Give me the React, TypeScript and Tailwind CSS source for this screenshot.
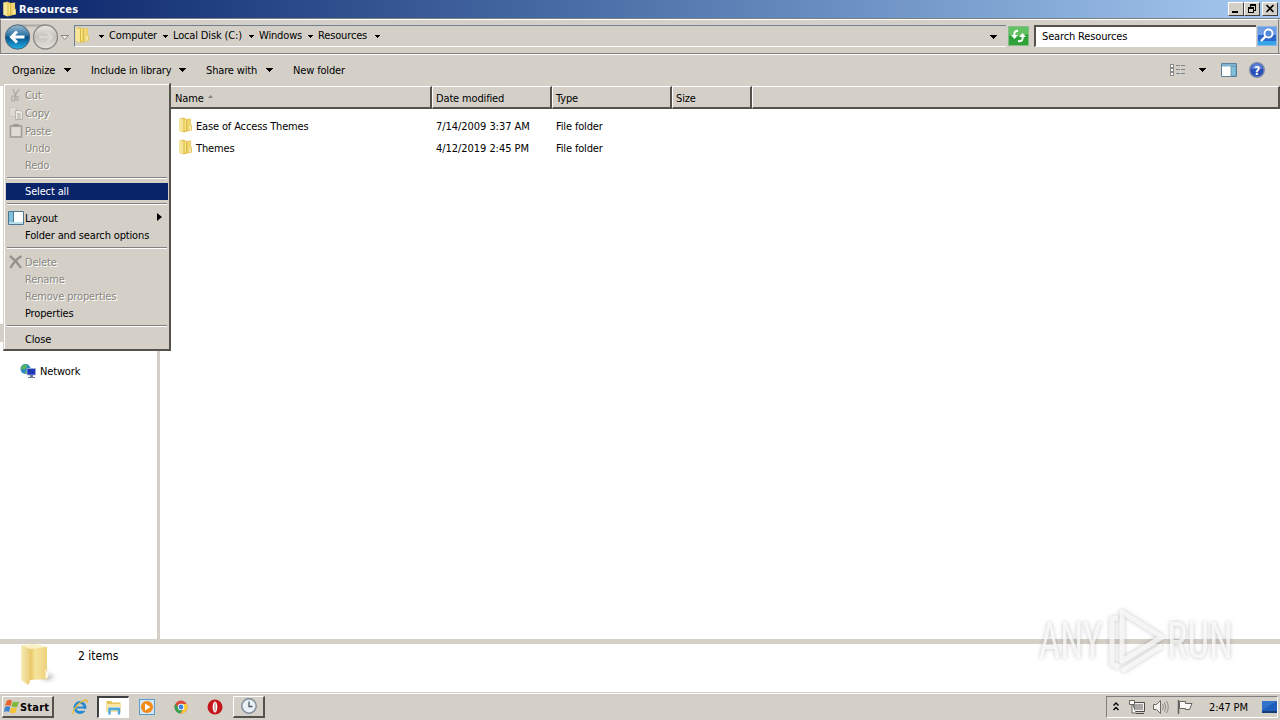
import React from 'react'
import clsx from 'clsx'

const Folder = ({ className }: { className?: string }) => (
  <svg viewBox="0 0 14 16" className={clsx('shrink-0', className)}>
    <path d="M.5 1 L5 0 L8 1.500 L13 1 V7 L14 9 V14 L9 15 L5 16 L.5 14.500 Z" fill="#e6c765" />
    <path d="M.5 1 L5 2 V15.500 L.5 14 Z" fill="#f6e798" />
    <path d="M5 2 H8.500 V14.500 L5 15.500 Z" fill="#dcb53e" />
    <path d="M6 2 H7.500 V14 L6 14.500 Z" fill="#f9ee8e" />
    <path d="M9 2 L12.500 1.500 V13.500 L9 14 Z" fill="#efd673" />
    <path d="M12 9 V13.500" stroke="#fffbe0" strokeWidth="1" />
  </svg>
)

const Caret = ({ className }: { className?: string }) => (
  <svg viewBox="0 0 7 4" preserveAspectRatio="none" className={clsx('shrink-0', className)} shapeRendering="crispEdges">
    <path d="M0 0 H7 L3.500 4 Z" fill="#000" />
  </svg>
)

const CutIcon = () => (
  <svg viewBox="0 0 16 16" className="size-4">
    <path d="M5 2 L8 10 M11 2 L6 10" stroke="#b3afa7" strokeWidth="1.500" />
    <path d="M4 9 h2.500 v5 H3.500 z M8 9.500 h2 v4 h-2 z" fill="none" stroke="#b3afa7" strokeWidth="1.200" />
  </svg>
)

const CopyIcon = () => (
  <svg viewBox="0 0 16 16" className="size-4">
    <path d="M1.500 2.500 h7 v9 h-7 z" fill="#dedad3" stroke="#c9c5bd" />
    <path d="M7.500 5.500 h5 l2 2 v7 h-7 z" fill="#eceae6" stroke="#b8b4ac" />
    <path d="M9 9 h4 M9 11 h4 M9 13 h4" stroke="#aaa69e" />
  </svg>
)

const PasteIcon = () => (
  <svg viewBox="0 0 16 16" className="size-4">
    <path d="M2.500 3 h11 v11 h-11 z" fill="#dfdcd5" stroke="#a09c94" strokeWidth="1.600" />
    <path d="M5 1 h6 v3 H5 z" fill="#a09c94" />
  </svg>
)

const LayoutIcon = () => (
  <svg viewBox="0 0 16 16" className="size-4">
    <path d="M.5 1.500 h15 v13 H.5 z" fill="#fff" stroke="#4c7792" />
    <path d="M1 2 h4 v10 H1 z" fill="#7fc0dc" />
    <path d="M5.500 2 v10" stroke="#4c7792" />
    <path d="M1 12 h14 v2 H1 z" fill="#b9dcea" />
  </svg>
)

const DeleteIcon = () => (
  <svg viewBox="0 0 16 16" className="size-4">
    <path d="M2 2 C6 5 10 9 13 14 M13.500 2 C9 5 5 9 2.500 14" stroke="#96928a" strokeWidth="2.200" fill="none" />
  </svg>
)

type Item = { label?: string; icon?: React.ReactNode; off?: boolean; on?: boolean; sub?: boolean }

const menu: Item[] = [
  { label: 'Cut', icon: <CutIcon />, off: true },
  { label: 'Copy', icon: <CopyIcon />, off: true },
  { label: 'Paste', icon: <PasteIcon />, off: true },
  { label: 'Undo', off: true },
  { label: 'Redo', off: true },
  {},
  { label: 'Select all', on: true },
  {},
  { label: 'Layout', icon: <LayoutIcon />, sub: true },
  { label: 'Folder and search options' },
  {},
  { label: 'Delete', icon: <DeleteIcon />, off: true },
  { label: 'Rename', off: true },
  { label: 'Remove properties', off: true },
  { label: 'Properties' },
  {},
  { label: 'Close' },
]

const OrganizeMenu = () => (
  <div className="absolute left-[3px] top-[83px] h-[268px] w-[168px] border-b-2 border-r-2 border-l border-t border-[#55524d] border-l-[#d4d0c8] border-t-[#d4d0c8] bg-[#d4d0c8]">
    <div className="h-full border-l border-t border-white px-px pt-px">
      {menu.map((m, i) =>
        m.label ? (
          <div
            key={i}
            className={clsx(
              'flex items-center pl-0.5',
              m.icon ? 'h-[18px]' : 'h-[17px]',
              m.off && 'text-[#8a877f] [text-shadow:1px_1px_0_#fff]',
              m.on && 'bg-[#0a246a] text-white',
            )}
          >
            <span className="flex w-[17px] shrink-0">{m.icon}</span>
            <span className={clsx('grow', m.icon && 'pt-0.5')}>{m.label}</span>
            {m.sub && (
              <svg viewBox="0 0 5 8" className="mb-0.5 mr-1.5 h-2 w-[5px]">
                <path d="M0 0 L5 4 L0 8 Z" />
              </svg>
            )}
          </div>
        ) : (
          <div key={i} className="h-[9px] px-px pt-[3px]">
            <div className="h-0.5 w-full border-b border-t border-b-white border-t-[#808080]" />
          </div>
        ),
      )}
    </div>
  </div>
)

const WinButton = ({ children, className }: { children: React.ReactNode; className?: string }) => (
  <div className={clsx('h-3.5 w-4 border-b border-r border-l border-t border-[#404040] border-l-white border-t-white bg-[#d4d0c8]', className)}>
    <svg viewBox="0 0 14 12" className="h-3 w-3.5" fill="none" stroke="#000" shapeRendering="crispEdges">
      {children}
    </svg>
  </div>
)

const TitleBar = () => (
  <div className="flex h-[18px] items-center bg-linear-to-r from-[#0a246a] to-[#a6caf0] pl-[3px] pr-0.5">
    <Folder className="h-4 w-[13px]" />
    <span className="ml-[3px] grow pt-px text-[11px] font-bold tracking-[0.22px] text-white">Resources</span>
    <WinButton>
      <path d="M3 9 h6" strokeWidth="2" />
    </WinButton>
    <WinButton>
      <path d="M5 1.500 h6 M5 2.500 h6 M5.500 1 v3 M10.500 2 v5 h-2 M3 4.500 h6 M3 5.500 h6 M3.500 5 v4.500 h5 v-4.500" />
    </WinButton>
    <WinButton className="ml-0.5">
      <path d="M3.500 2 L10.500 9 M10.500 2 L3.500 9" strokeWidth="1.600" shapeRendering="auto" />
    </WinButton>
  </div>
)

const NavButtons = () => (
  <svg viewBox="0 0 72 30" className="h-[30px] w-[72px] shrink-0">
    <defs>
      <linearGradient id="back" x2="0" y2="1">
        <stop offset="0" stopColor="#9bb9cd" />
        <stop offset=".45" stopColor="#2873a6" />
        <stop offset=".5" stopColor="#07508b" />
        <stop offset="1" stopColor="#23b5e8" />
      </linearGradient>
      <linearGradient id="fwd" x2="0" y2="1">
        <stop offset="0" stopColor="#e8e6e2" />
        <stop offset=".5" stopColor="#c5c2bc" />
        <stop offset="1" stopColor="#e6e3df" />
      </linearGradient>
    </defs>
    <path d="M15 4.500 H43" stroke="#aaa9a6" strokeWidth="2" />
    <circle cx="15.500" cy="16" r="12.200" fill="url(#back)" stroke="#4e6478" />
    <path d="M22.500 16 H10 M15 10.500 L9.500 16 L15 21.500" stroke="#fff" strokeWidth="3" fill="none" />
    <circle cx="43.500" cy="16" r="12" fill="url(#fwd)" stroke="#8b8985" strokeWidth="1.300" />
    <path d="M37 16 H50 M45 11 L50 16 L45 21" stroke="#d9d7d3" strokeWidth="2.500" fill="none" />
    <path d="M59 14.500 H66.500 L62.700 18.500 Z" fill="#f2f0ec" stroke="#8b8985" />
  </svg>
)

const crumbs = [
  { name: 'Computer', w: 'w-[64px]' },
  { name: 'Local Disk (C:)', w: 'w-[86px]' },
  { name: 'Windows', w: 'w-[59px]' },
  { name: 'Resources', w: 'w-[67px]' },
]

const AddressBar = () => (
  <div className="flex h-[36px] items-start border-b border-t border-[#808080] pr-px">
    <div className="flex h-[34px] w-full items-start border-l border-r border-t border-[#808080] border-t-white">
      <div className="ml-px mt-px">
        <NavButtons />
      </div>
      <div className="mt-[5px] flex h-[22px] w-[932px] items-center border-b border-l border-t border-[#708090] border-b-white">
        <Folder className="mb-0.5 h-4 w-3.5" />
        <Caret className="ml-[10px] h-[3px] w-[5px]" />
        <div className="ml-[5px] flex items-center">
          {crumbs.map((c) => (
            <div key={c.name} className={clsx('flex items-center justify-between', c.w)}>
              <span className="whitespace-nowrap">{c.name}</span>
              <Caret className="mr-[5px] h-[3px] w-[5px]" />
            </div>
          ))}
        </div>
        <div className="grow" />
        <Caret className="mr-[9px] mt-px h-1 w-[7px]" />
      </div>
      <svg viewBox="0 0 21 20" className="ml-0.5 mt-[6px] h-5 w-[21px] shrink-0">
        <rect x=".5" y=".5" width="20" height="19" fill="#2fa33a" stroke="#86bc86" />
        <path d="M1 1 H20 V8 Q10 12 1 9 Z" fill="#62c163" />
        <path d="M10 5 Q5.500 4 6.500 11" stroke="#fff" strokeWidth="2" fill="none" />
        <path d="M3 9 H10 L6.500 13 Z" fill="#fff" />
        <path d="M10 15 Q16 16 14.500 9.500" stroke="#fff" strokeWidth="2" fill="none" />
        <path d="M11 11 H18 L14.500 7 Z" fill="#fff" />
      </svg>
      <div className="ml-[5px] mt-[5px] flex h-[22px] w-[222px] items-center border-l-2 border-t-2 border-b border-[#55524d] border-b-white bg-white pl-1.5 pt-px">
        Search Resources
      </div>
      <svg viewBox="0 0 20 20" className="ml-px mt-[6px] size-5 shrink-0">
        <rect x=".5" y=".5" width="19" height="19" fill="#2a66cc" stroke="#8fb5e6" />
        <path d="M1 1 H19 V9 H1 Z" fill="#6c9ce4" />
        <path d="M1 15 H19 V19 H1 Z" fill="#36a5ea" />
        <circle cx="11.500" cy="7.500" r="4" fill="#5486d8" stroke="#fff" strokeWidth="1.800" />
        <path d="M8.500 10.500 L4 15" stroke="#fff" strokeWidth="2.400" />
      </svg>
    </div>
  </div>
)

const commands = [
  { name: 'Organize', w: 'w-[79px]', caret: true },
  { name: 'Include in library', w: 'w-[115px]', caret: true },
  { name: 'Share with', w: 'w-[87px]', caret: true },
  { name: 'New folder', w: 'w-[80px]' },
]

const Toolbar = () => (
  <div className="flex h-[32px] items-center border-t border-white pb-px pl-3 pr-[15px]">
    {commands.map((c) => (
      <div key={c.name} className={clsx('flex items-center justify-between', c.w)}>
        <span className="whitespace-nowrap pt-px">{c.name}</span>
        {c.caret && <Caret className="mr-5 h-1 w-[7px]" />}
      </div>
    ))}
    <div className="grow" />
    <svg viewBox="0 0 16 13" className="h-[13px] w-4" shapeRendering="crispEdges">
      {[0, 4, 8].map((y) => (
        <g key={y} fill="none">
          <rect x=".5" y={y + 0.5} width="3" height="3" fill="#fff" stroke="#8a8a8a" />
          <path d={`M6 ${y + 1.5} h4 M11 ${y + 1.5} h4`} stroke="#7d8590" />
        </g>
      ))}
    </svg>
    <Caret className="ml-[13px] h-1 w-[7px]" />
    <svg viewBox="0 0 16 14" className="ml-[15px] h-3.5 w-4">
      <path d="M.5 .5 h15 v13 H.5 z" fill="#fff" stroke="#5b8299" />
      <path d="M1 1 h14 v2.500 H1 z" fill="#7eb3cf" />
      <path d="M10 3.500 h5 v9.500 h-5 z" fill="#81c1de" stroke="#5b8299" strokeWidth=".7" />
    </svg>
    <svg viewBox="0 0 16 16" className="ml-3 size-4">
      <circle cx="8" cy="8" r="7.300" fill="#2a50b8" stroke="#7d8cb0" strokeWidth="1.400" />
      <path d="M2.500 7 A5.500 5.500 0 0 1 13.500 7 Z" fill="#5b7ed6" />
      <text x="8" y="12.500" textAnchor="middle" fontSize="12" fontWeight="bold" fill="#fff">?</text>
    </svg>
  </div>
)

const HeaderCell = ({ children, className }: { children?: React.ReactNode; className?: string }) => (
  <div className={clsx('flex items-center border-b-2 border-l border-r-2 border-t border-[#55524d] border-l-white border-t-white pt-[3px]', className)}>
    {children}
  </div>
)

const files = [
  { name: 'Ease of Access Themes', date: '7/14/2009 3:37 AM', type: 'File folder' },
  { name: 'Themes', date: '4/12/2019 2:45 PM', type: 'File folder' },
]

const FileList = () => (
  <div className="flex grow flex-col">
    <div className="flex h-[23px] bg-[#d4d0c8]">
      <HeaderCell className="w-[272px] pl-3.5">
        Name
        <svg viewBox="0 0 5 3" className="mb-1 ml-1 h-[3px] w-[5px]">
          <path d="M0 3 L2.500 0 L5 3 Z" fill="#85827b" />
        </svg>
      </HeaderCell>
      <HeaderCell className="w-[120px] pl-[3px]">Date modified</HeaderCell>
      <HeaderCell className="w-[120px] pl-[3px]">Type</HeaderCell>
      <HeaderCell className="w-[80px] pl-[3px]">Size</HeaderCell>
      <HeaderCell className="grow" />
    </div>
    <div className="pl-[19px] pt-[6px]">
      {files.map((f) => (
        <div key={f.name} className="flex h-[22px] items-center">
          <Folder className="mb-0.5 h-4 w-[13px]" />
          <span className="ml-1 w-[240px] pt-0.5">{f.name}</span>
          <span className="w-[120px] pt-0.5 tracking-[-0.05px]">{f.date}</span>
          <span className="pt-0.5">{f.type}</span>
        </div>
      ))}
    </div>
  </div>
)

const NavPane = () => (
  <div className="flex w-40 shrink-0 flex-col border-r-[3px] border-[#d4d0c8]">
    <div className="mt-[238px] h-[18px] w-[3px] bg-[#d4d0c8]" />
    <div className="mt-[20px] flex items-center pl-5">
      <svg viewBox="0 0 16 16" className="size-4">
        <circle cx="5.500" cy="6" r="5" fill="#2c86c4" />
        <path d="M2 3 Q5 0 8 3 L5 6 Q3 7 1 6 Z M5 8 L8 9 L5 11 Z" fill="#55b45c" />
        <path d="M7 5.500 H15.500 V12 H7 Z" fill="#1d36b8" stroke="#a7b6dc" strokeWidth=".8" />
        <path d="M10 12 h3 v2 h2 v1 H8 v-1 h2 z" fill="#6d7a96" />
      </svg>
      <span className="ml-1 pt-[3px]">Network</span>
    </div>
  </div>
)

const DetailsPane = () => (
  <div className="flex h-[53px] border-t-[5px] border-[#d4d0c8] bg-white pl-5">
    <svg viewBox="0 0 40 44" className="h-11 w-10 shrink-0">
      <defs>
        <linearGradient id="fold">
          <stop offset="0" stopColor="#e6c462" />
          <stop offset=".3" stopColor="#f6e49c" />
          <stop offset="1" stopColor="#ecd07a" />
        </linearGradient>
        <linearGradient id="flap">
          <stop offset="0" stopColor="#f7ebb8" />
          <stop offset="1" stopColor="#ebce78" />
        </linearGradient>
        <radialGradient id="shade">
          <stop offset="0" stopColor="#aab0ae" />
          <stop offset="1" stopColor="#fff" stopOpacity="0" />
        </radialGradient>
      </defs>
      <ellipse cx="27" cy="33" rx="12" ry="8" fill="url(#shade)" />
      <path d="M1 1 L16 0 L27 3 V10 L10 10 Z" fill="#faf0c6" />
      <path d="M10 5 L27 3 V23 L28 35 L10 36 Z" fill="url(#fold)" />
      <path d="M1 1 L10 5 V38 L8 41 L1 36 Z" fill="url(#flap)" />
      <path d="M25.500 25 L28.500 29 V33 L25.500 35 Z" fill="#fbf8e6" />
    </svg>
    <span className="ml-[18px] mt-[5px] text-[12px] tracking-[0px]">2 items</span>
  </div>
)

const TaskIcon = ({ children, className }: { children: React.ReactNode; className?: string }) => (
  <div className={clsx('flex h-[22px] w-8 items-center justify-center', className)}>
    <svg viewBox="0 0 16 16" className="size-4">
      {children}
    </svg>
  </div>
)

const Taskbar = () => (
  <div className="flex h-[28px] items-center border-t border-[#d4d0c8] bg-[#d4d0c8] shadow-[inset_0_1px_0_#fff]">
    <div className="ml-0.5 mt-px flex h-[22px] w-[52px] items-center border-b-2 border-l border-r-2 border-t border-[#55524d] border-l-white border-t-white pl-px">
      <svg viewBox="0 0 16 15" className="h-[15px] w-4">
        <path d="M3 1.500 Q6 0 8 2 L6.500 7 Q4 5.500 1 7 Z" fill="#e8632a" />
        <path d="M9 2.500 Q12 4 15 2.500 L13.500 7.500 Q10.500 9 7.500 7.300 Z" fill="#7fb83c" />
        <path d="M1 8 Q4 6.500 6.300 8 L5 13 Q2.500 11.500 0 13 Z" fill="#3c82cf" />
        <path d="M7.200 8.500 Q10 10 13 8.500 L11.500 13.500 Q8.500 15 6 13.500 Z" fill="#f5c330" />
      </svg>
      <span className="pt-0.5 text-[11px] font-bold tracking-[0.2px]">Start</span>
    </div>
    <TaskIcon className="ml-2.5">
      <circle cx="8" cy="8.500" r="5" fill="none" stroke="#2588d0" strokeWidth="3" />
      <path d="M4 8.500 H13" stroke="#2588d0" strokeWidth="2" />
      <path d="M10 10.800 H15" stroke="#d4d0c8" strokeWidth="2" />
      <path d="M2 15 C-2 14 7 2 14 1 Q16 1 14.500 4" stroke="#e8b93c" strokeWidth="1.300" fill="none" />
    </TaskIcon>
    <TaskIcon className="ml-px border-b border-l-2 border-r border-t-2 border-white border-l-[#404040] border-t-[#404040] bg-white">
      <path d="M.5 2 h5 l1 1.500 h8 v9 H.5 z" fill="#e5c35a" />
      <path d="M1 5 h14 v7 H1 z" fill="#f8e7a2" />
      <path d="M3.500 15.500 V10 H13 V15.500" stroke="#4ea8dc" strokeWidth="2.400" fill="none" />
      <path d="M2.500 8.500 H14" stroke="#a5d6ee" />
    </TaskIcon>
    <TaskIcon className="ml-0.5">
      <rect x=".5" y=".5" width="15" height="15" fill="#d5e6f4" stroke="#5b9bd0" />
      <circle cx="8" cy="8" r="6" fill="#f28a16" />
      <path d="M6 4.500 L11.500 8 L6 11.500 Z" fill="#fff" />
    </TaskIcon>
    <TaskIcon className="ml-0.5">
      <circle cx="8" cy="8" r="6.500" fill="#de4a3c" />
      <path d="M2.400 4.700 A6.500 6.500 0 0 0 7.500 14.500 L10.500 9 L6 9.500 Z" fill="#35a352" />
      <path d="M8 5 H13.800 A6.500 6.500 0 0 1 7.500 14.500 L10.800 9.500 Z" fill="#f7cb3a" />
      <circle cx="8" cy="8" r="3.200" fill="#fff" />
      <circle cx="8" cy="8" r="2.400" fill="#4182e0" />
    </TaskIcon>
    <TaskIcon className="ml-0.5">
      <circle cx="8" cy="8" r="7.500" fill="#c4161c" />
      <ellipse cx="8" cy="8" rx="2.300" ry="5.500" fill="#fff" />
      <ellipse cx="8" cy="8" rx="1" ry="4.800" fill="#d4b4b4" />
    </TaskIcon>
    <TaskIcon className="ml-0.5 border-b-2 border-l border-r-2 border-t border-[#55524d] border-l-white border-t-white">
      <circle cx="8" cy="8" r="7.200" fill="#e9f1f7" stroke="#7f8a94" strokeWidth="1.400" />
      <path d="M8 3.500 V8.500 H11.500" stroke="#4b5964" strokeWidth="1.300" fill="none" />
    </TaskIcon>
    <div className="grow" />
    <div className="mr-0.5 mt-px flex h-[22px] w-[172px] items-center border border-[#808080] border-b-white border-r-white pl-1.5">
      <svg viewBox="0 0 6 9" className="mb-0.5 h-[9px] w-1.5" fill="none" stroke="#000" strokeWidth="1.400">
        <path d="M.5 3.500 L3 1 L5.500 3.500 M.5 8 L3 5.500 L5.500 8" />
      </svg>
      <svg viewBox="0 0 16 16" className="ml-2.5 size-4" fill="none" stroke="#68655f">
        <path d="M4.500 3.500 H15.500 V12.500 H5.500 Z" fill="#a9a8a5" stroke="#4e4c48" />
        <path d="M5.500 4.500 H14.500 V11.500 H6" stroke="#f4f3f0" />
        <path d="M7 14.500 H15" stroke="#4e4c48" />
        <path d="M.5 1.500 H5.500 V5.500 H.5 Z M3 6 V14 H7" fill="#fff" />
      </svg>
      <svg viewBox="0 0 16 16" className="ml-2 size-4" fill="none" stroke="#6d6a64">
        <path d="M.5 5.500 H3.500 L7.500 1.500 V14.500 L3.500 10.500 H.5 Z" fill="#f4f3f0" />
        <path d="M9.500 5 Q11.500 8 9.500 11 M11.500 3.500 Q14 8 11.500 12.500 M13.500 2 Q17 8 13.500 14" stroke="#908d86" />
      </svg>
      <svg viewBox="0 0 16 16" className="ml-2 size-4" fill="none" stroke="#66635d">
        <path d="M2.500 2.500 H8.500 V4.500 L15 4.500 L12.500 10.500 H8.500 V9.500 H2.500 Z" fill="#faf9f7" />
        <path d="M1.500 1 V15" strokeWidth="1.500" />
      </svg>
      <span className="ml-4 grow whitespace-nowrap pt-0.5">2:47 PM</span>
      <svg viewBox="0 0 15 12" className="h-3 w-[15px] shrink-0">
        <path d="M0 0 H15 V12 H0 Z" fill="#1f5ebc" />
        <path d="M0 0 H15 L0 9 Z" fill="#3572c9" />
        <path d="M0 11 H15" stroke="#153c73" strokeWidth="2" />
      </svg>
    </div>
  </div>
)

const Watermark = () => (
  <svg viewBox="0 0 220 74" className="absolute left-[1030px] top-[604px] h-[74px] w-[220px] overflow-visible drop-shadow-[0_0_2px_rgba(0,0,0,0.3)]">
    <g fill="#fff" fillOpacity=".75" fontFamily="Roboto, sans-serif" fontSize="50" letterSpacing="0">
      <text x="9" y="54" textLength="63" lengthAdjust="spacingAndGlyphs">ANY</text>
      <text x="137" y="54" textLength="66" lengthAdjust="spacingAndGlyphs">RUN</text>
    </g>
    <g fill="none" stroke="#fff" strokeOpacity=".75" strokeWidth="5" strokeLinejoin="round">
      <path d="M92 8 L132 33 L92 57 Z" />
      <path d="M88 14 L82 15 V60 L89 63 M92 67 L132 42" />
    </g>
  </svg>
)

export default function App() {
  return (
    <div className="relative flex h-[720px] w-[1280px] flex-col overflow-hidden bg-[#d4d0c8] font-['DejaVu_Sans_Condensed','DejaVu_Sans',sans-serif] text-[11px] leading-[14px] tracking-[-0.15px] text-black [font-stretch:condensed]">
      <TitleBar />
      <AddressBar />
      <Toolbar />
      <div className="flex grow bg-white">
        <NavPane />
        <FileList />
      </div>
      <DetailsPane />
      <Taskbar />
      <OrganizeMenu />
      <Watermark />
    </div>
  )
}
